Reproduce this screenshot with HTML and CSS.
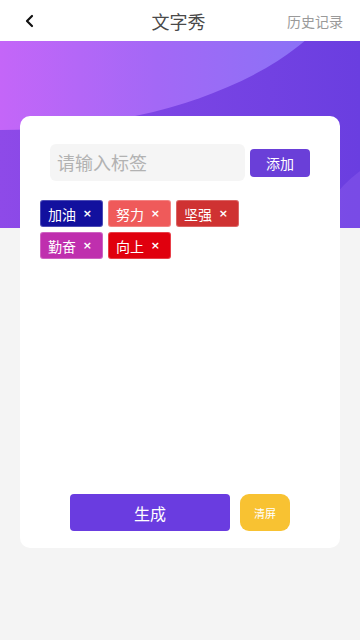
FILE: index.html
```html
<!DOCTYPE html>
<html lang="zh">
<head>
<meta charset="utf-8">
<link rel="stylesheet" href="styles.css">
</head>
<body>
<header class="topbar">
  <span class="back">
    <svg width="12" height="14" viewBox="0 0 12 14"><polyline points="8,2 3,7 8,12" fill="none" stroke="#111" stroke-width="2.2" stroke-linecap="round" stroke-linejoin="round"/></svg>
  </span>
  <h1 class="title">文字秀</h1>
  <span class="history">历史记录</span>
</header>
<section class="hero"></section>
<main class="card">
  <div class="input-row">
    <div class="input">请输入标签</div>
    <button class="add">添加</button>
  </div>
  <div class="tags">
    <span class="tag t-navy">加油<i>×</i></span>
    <span class="tag t-salmon">努力<i>×</i></span>
    <span class="tag t-red">坚强<i>×</i></span>
    <span class="tag t-magenta">勤奋<i>×</i></span>
    <span class="tag t-bright">向上<i>×</i></span>
  </div>
  <div class="actions">
    <button class="generate">生成</button>
    <button class="clear">清屏</button>
  </div>
</main>
</body>
</html>
```
FILE: styles.css
```css
* { box-sizing: border-box; }
body {
  margin: 0;
  background: #f4f4f4;
  font-family: "Noto Sans CJK SC", "Noto Sans", sans-serif;
  width: 360px;
  height: 640px;
  overflow: hidden;
}
.topbar {
  height: 41px;
  background: #fff;
  display: flex;
  align-items: center;
  padding: 0 17px 0 24px;
  position: relative;
}
.back { display: flex; width: 12px; height: 14px; }
.title {
  flex: 1;
  margin: 0;
  text-align: center;
  font-size: 18px;
  font-weight: 400;
  color: #4a4a4a;
  padding-left: 34px;
}
.history { font-size: 14px; color: #9a9a9a; }
.hero {
  height: 187px;
  position: relative;
  overflow: hidden;
  background: linear-gradient(90deg, #8e4ae8 0%, #7a44e4 50%, #6a3ee0 100%);
}
.hero::before {
  content: "";
  position: absolute;
  left: -359px;
  top: -289px;
  width: 718px;
  height: 378px;
  border-radius: 50%;
  background: linear-gradient(90deg, #c466f8 50%, #a368f6 72%, #8a72f6 93%);
}
.hero::after {
  content: "";
  position: absolute;
  left: 300px;
  top: 100px;
  width: 300px;
  height: 300px;
  border-radius: 50%;
  background: rgba(150, 100, 240, 0.35);
}
.card {
  margin: -112px 20px 0;
  height: 432px;
  background: #fff;
  border-radius: 10px;
  position: relative;
  padding: 28px 20px 17px;
  display: flex;
  flex-direction: column;
}
.input-row {
  display: flex;
  align-items: center;
  padding: 0 10px;
  gap: 5px;
}
.input {
  width: 195px;
  height: 37px;
  background: #f5f5f5;
  border-radius: 6px;
  font-size: 18px;
  line-height: 37px;
  color: #b2b2b2;
  padding-left: 7px;
}
.add {
  width: 60px;
  height: 28px;
  border: none;
  border-radius: 4px;
  background: #6a3fd8;
  color: #fff;
  font-family: inherit;
  font-size: 14px;
  padding: 0;
}
.tags {
  margin-top: 19px;
  display: flex;
  flex-wrap: wrap;
  gap: 5px 5px;
  width: 210px;
}
.tag {
  width: 63px;
  height: 27px;
  border-radius: 3px;
  border: 1px solid rgba(255,255,255,0.25);
  color: #fff;
  font-size: 14px;
  display: flex;
  align-items: center;
  justify-content: space-between;
  padding: 0 10px 0 7px;
  line-height: 1;
}
.tag i {
  font-style: normal;
  font-family: "DejaVu Sans", sans-serif;
  font-size: 11px;
  font-weight: 700;
}
.t-navy { background: #12109e; }
.t-salmon { background: #ef5a5a; }
.t-red { background: #cf3232; }
.t-magenta { background: #bf2fae; }
.t-bright { background: #e0000e; }
.actions {
  margin-top: auto;
  display: flex;
  gap: 10px;
  padding-left: 30px;
}
.generate {
  width: 160px;
  height: 37px;
  border: none;
  border-radius: 4px;
  background: #6a3ce0;
  color: #fff;
  font-family: inherit;
  font-size: 16px;
  padding: 0;
}
.clear {
  width: 50px;
  height: 37px;
  border: none;
  border-radius: 9px;
  background: #f8c232;
  color: #fff;
  font-family: inherit;
  font-size: 11px;
  padding: 0;
}
```
